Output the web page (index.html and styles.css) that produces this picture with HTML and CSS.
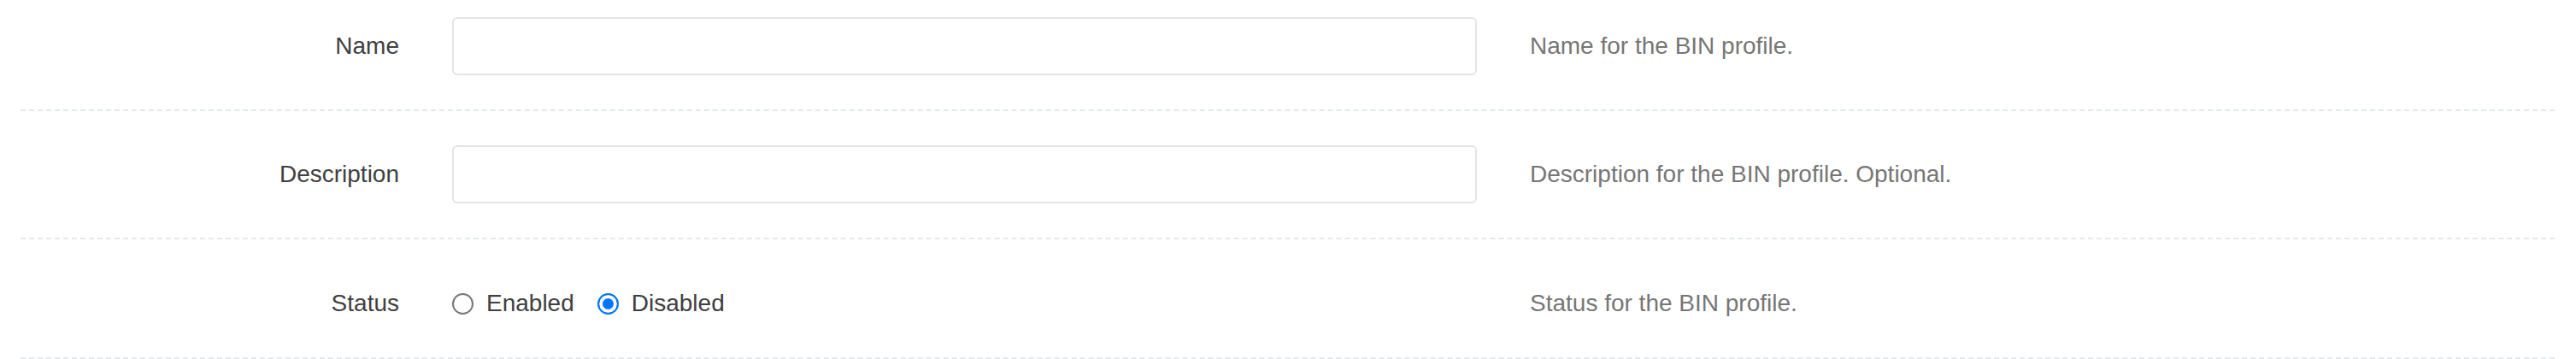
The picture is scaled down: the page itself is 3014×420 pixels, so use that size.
FILE: index.html
```html
<!DOCTYPE html>
<html lang="en">
<head>
    <meta charset="UTF-8">
    <meta name="viewport" content="width=device-width, initial-scale=1.0">
    <title>BIN Profile</title>
    <link rel="stylesheet" href="styles.css">
</head>
<body>

    <form class="profile-form">
        <div class="form-row">
            <label class="form-label" for="name">Name</label>
            <div class="form-control">
                <input type="text" id="name" class="text-input">
            </div>
            <p class="form-help">Name for the BIN profile.</p>
        </div>

        <div class="form-row">
            <label class="form-label" for="description">Description</label>
            <div class="form-control">
                <input type="text" id="description" class="text-input">
            </div>
            <p class="form-help">Description for the BIN profile. Optional.</p>
        </div>

        <div class="form-row form-row-radio">
            <span class="form-label">Status</span>
            <div class="form-control radio-group">
                <label class="radio-option">
                    <input type="radio" name="status" value="enabled">
                    <span>Enabled</span>
                </label>
                <label class="radio-option">
                    <input type="radio" name="status" value="disabled" checked>
                    <span>Disabled</span>
                </label>
            </div>
            <p class="form-help">Status for the BIN profile.</p>
        </div>
    </form>

</body>
</html>
```

FILE: styles.css
```css
/* Page */
body {
    margin: 0;
    background-color: #fff;
    font-family: "Liberation Sans", Arial, sans-serif;
    font-size: 28px;
    color: #404040;
}

/* Form Container */
.profile-form {
    padding: 0 25px 0 24px;
}

/* Rows */
.form-row {
    display: grid;
    grid-template-columns: 443px 1199px 1fr;
    column-gap: 62px;
    align-items: center;
    padding: 40px 0;
    border-bottom: 2px dashed #e3e8ec;
}

.form-row:first-child {
    padding-top: 20px;
}

.form-row-radio {
    padding: 61px 0 49px;
}

/* Label Column */
.form-label {
    text-align: right;
    line-height: 28px;
}

/* Inputs */
.text-input {
    display: block;
    width: 100%;
    height: 68px;
    box-sizing: border-box;
    border: 2px solid #e4e4e4;
    border-radius: 6px;
    padding: 0 20px;
    font: inherit;
    background-color: #fff;
}

/* Radios */
.radio-group {
    display: flex;
    align-items: center;
    line-height: 28px;
}

.radio-option {
    display: inline-flex;
    align-items: center;
    gap: 15px;
    margin-right: 27px;
}

.radio-option input {
    appearance: none;
    margin: 0;
    width: 25px;
    height: 25px;
    border: 2px solid #767676;
    border-radius: 50%;
    background-color: #fff;
}

.radio-option input:checked {
    border-color: #0075ff;
    background-color: #0075ff;
    box-shadow: inset 0 0 0 4px #fff;
}

/* Help Text */
.form-help {
    margin: 0;
    color: #767676;
    line-height: 28px;
}
```
